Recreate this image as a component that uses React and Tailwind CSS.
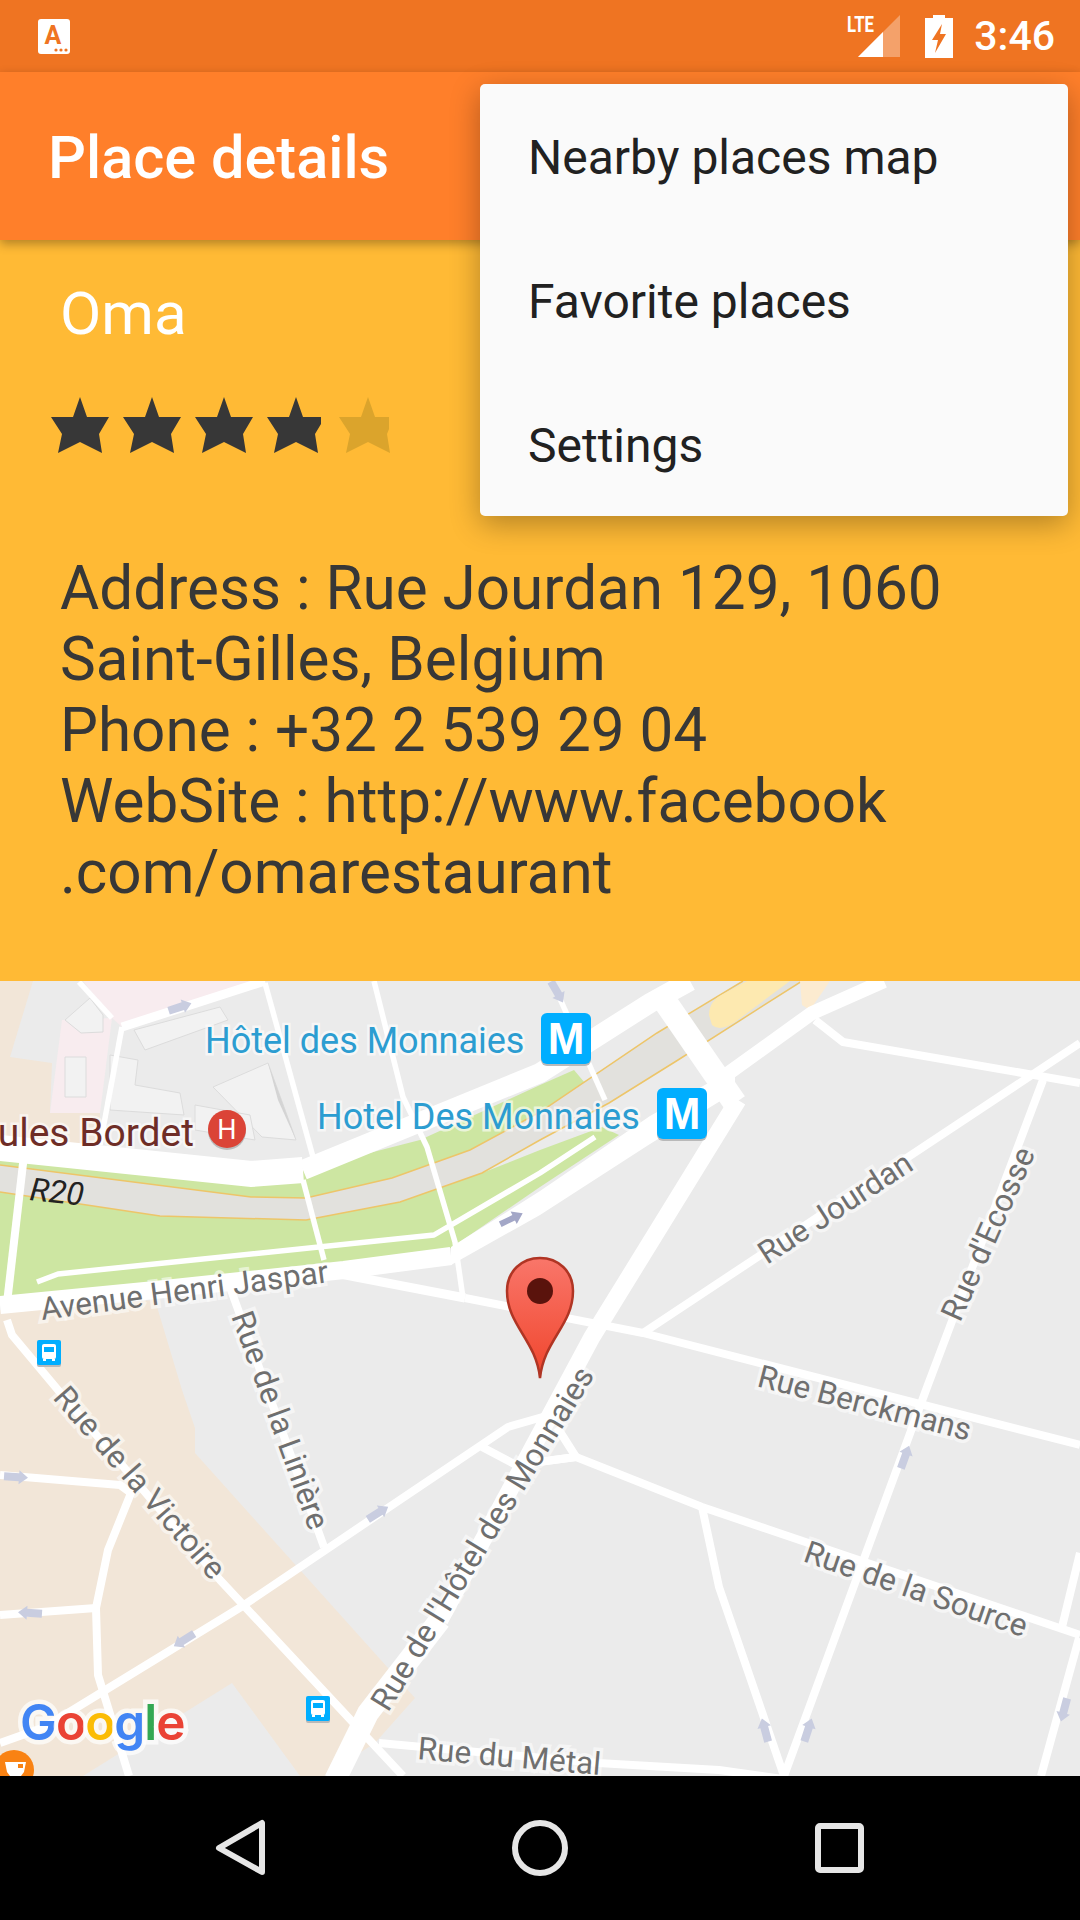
const thinRoads = [
  "M7 1320L12 1335L58 1390L220 1580L403 1776",
  "M24 1155L7 1303",
  "M0 1475L120 1485L131 1493L108 1550L96 1608L98 1675L129 1776",
  "M0 1615L96 1608",
  "M0 1743L45 1727L241 1607L508 1427L560 1412",
  "M482 1447L516 1465L576 1457L557 1427",
  "M516 1465L576 1457L702 1507L1080 1635",
  "M702 1507L719 1587L784 1776",
  "M1043 1080L926 1390L784 1776",
  "M465 1298L643 1333L1080 1445",
  "M643 1333L1080 1043",
  "M815 1020L843 1042L1080 1083",
  "M379 1743L598 1763L719 1770L790 1780",
  "M1062 1627L1080 1553",
  "M1079 1638L1041 1776",
  "M231 1290L324 1547",
];

const parkPaths = [
  "M265 983L313 1157",
  "M374 981L403 1097L427 1147L455 1242L463 1298",
  "M303 1180L324 1260",
  "M79 982L112 1018",
  "M553 983L605 1100",
  "M122 1027L100 1145",
  "M37 1282L58 1274L434 1235L540 1173L595 1137",
];

const buildings = [
  "M65 1020L90 998L103 1015L103 1032L81 1033Z",
  "M65 1057H86V1097H65Z",
  "M134 1030L220 1007L228 1020L145 1050Z",
  "M110 1055L138 1060L135 1085L180 1093L184 1115L110 1110Z",
  "M213 1087L268 1063L296 1140L262 1137Z",
  "M195 1105L250 1115L255 1140L195 1130Z",
];

const arrows = [
  [180, 1007, -18],
  [557, 992, 60],
  [16, 1477, 4],
  [30, 1613, 184],
  [184, 1640, 148],
  [378, 1513, -32],
  [905, 1457, -70],
  [765, 1730, -105],
  [808, 1730, -72],
  [1064, 1710, 105],
];

const labels = [
  { text: "Avenue Henri Jaspar", x: 42, y: 1320, r: -7.5 },
  { text: "Rue de la Linière", x: 231, y: 1316, r: 70 },
  { text: "Rue de la Victoire", x: 52, y: 1398, r: 49 },
  { text: "Rue de l'Hôtel des Monnaies", x: 388, y: 1713, r: -58.5 },
  { text: "Rue Jourdan", x: 767, y: 1265, r: -33 },
  { text: "Rue d'Ecosse", x: 960, y: 1323, r: -66 },
  { text: "Rue Berckmans", x: 756, y: 1386, r: 14.5 },
  { text: "Rue de la Source", x: 802, y: 1561, r: 19 },
  { text: "Rue du Métal", x: 417, y: 1759, r: 5 },
];

const MetroIcon = ({ x, y }) => (
  <g>
    <rect x={x} y={y + 2} width="50" height="51" rx="6" fill="#b9b9b9" />
    <rect x={x} y={y} width="50" height="51" rx="6" fill="#00aeff" />
    <text x={x + 25} y={y + 41} textAnchor="middle" fontSize="44" fontWeight="700" fill="#fff" className="font-['Liberation_Sans']">
      M
    </text>
  </g>
);

const BusIcon = ({ x, y }) => (
  <g>
    <rect x={x} y={y + 2} width="24" height="25" rx="2" fill="#b9b9b9" />
    <rect x={x} y={y} width="24" height="25" rx="2" fill="#00aeff" />
    <rect x={x + 5} y={y + 4} width="14" height="15" rx="2" fill="#fff" />
    <rect x={x + 7} y={y + 7} width="10" height="5" fill="#00aeff" />
    <rect x={x + 6} y={y + 19} width="3" height="2" fill="#fff" />
    <rect x={x + 15} y={y + 19} width="3" height="2" fill="#fff" />
  </g>
);

const MapView = () => (
  <div className="flex-1 overflow-hidden bg-[#ebebeb]">
    <svg viewBox="0 981 1080 795" className="block w-full h-full font-['Roboto']">
      <defs>
        <linearGradient id="pin" x1="0" y1="0" x2="0" y2="1">
          <stop offset="0" stopColor="#f9766a" />
          <stop offset="1" stopColor="#f0452c" />
        </linearGradient>
      </defs>

      {/* land areas */}
      <path d="M0 981H33L10 1057L52 1063L50 1113H100L100 1145L0 1145Z" fill="#f2e6d8" />
      <path d="M83 981H255L122 1027L112 1018ZM62 1020L112 1018L100 1113H50Z" fill="#f8ecef" />
      <path d="M122 1027L255 985L265 981L313 1157L251 1165L100 1145L105 1100Z" fill="#ebebeb" />
      {buildings.map((d) => (
        <path key={d} d={d} fill="#f2f2f2" stroke="#dcdcdc" strokeWidth="1" />
      ))}
      <path d="M268 1063L296 1140L278 1100Z" fill="#d4d4d4" />
      <path d="M0 1310L155 1300L182 1390L195 1428L195 1453L415 1698L375 1743L324 1776H300L232 1683L83 1776H0Z" fill="#f2e6d8" />

      {/* park and the sunken road */}
      <path d="M0 1150L251 1180L303 1170L420 1140L540 1085L574 1070L585 1083L540 1120L482 1173L540 1150L602 1127L619 1135L540 1187L451 1248L0 1305Z" fill="#cde6a2" />
      <path d="M0 1165L251 1197L306 1198L392 1178L470 1150L540 1112L657 1033L743 981H802L709 1040L678 1060L609 1103L540 1140L482 1173L400 1202L306 1220L160 1216L0 1192Z" fill="#e2e1dd" />
      <path d="M0 1165L251 1197L306 1198L392 1178L470 1150L540 1112L657 1033L743 981" fill="none" stroke="#edc569" strokeWidth="1.5" />
      <path d="M0 1192L160 1216L306 1220L400 1202L482 1173L540 1140L609 1103L678 1060L802 981" fill="none" stroke="#edc569" strokeWidth="1.5" />
      <path d="M709 1015Q709 1000 725 993L747 981H790L735 1022Q720 1032 712 1025Z" fill="#fde9b0" />
      <path d="M800 981H830L810 1010L802 1005Z" fill="#fcebd0" />

      {/* main roads */}
      <path d="M0 1148L251 1174L303 1170" fill="none" stroke="#fff" strokeWidth="26" />
      <path d="M303 1170L540 1073L650 1003L690 981" fill="none" stroke="#fff" strokeWidth="20" />
      <path d="M0 1305L155 1290L344 1270L451 1256" fill="none" stroke="#fff" strokeWidth="18" />
      <path d="M451 1247L540 1191L650 1116L735 1068V1092L650 1144L540 1215L451 1265Z" fill="#fff" />
      <path d="M330 1272L465 1298" fill="none" stroke="#fff" strokeWidth="9" />
      <path d="M664 1000L735 1103" fill="none" stroke="#fff" strokeWidth="24" />
      <path d="M726 1075L812 1013L884 981" fill="none" stroke="#fff" strokeWidth="14" />
      <path d="M738 1100L592 1337L440 1620" fill="none" stroke="#fff" strokeWidth="17" />
      <path d="M440 1620L368 1713L335 1780" fill="none" stroke="#fff" strokeWidth="22" />
      <path d="M122 1027L265 981" fill="none" stroke="#fff" strokeWidth="9" />
      {thinRoads.map((d) => (
        <path key={d} d={d} fill="none" stroke="#fff" strokeWidth="8" strokeLinejoin="round" />
      ))}
      {parkPaths.map((d) => (
        <path key={d} d={d} fill="none" stroke="#fff" strokeWidth="5.5" strokeLinejoin="round" />
      ))}

      {arrows.map(([x, y, r]) => (
        <path
          key={`${x}-${y}`}
          d="M-12 -4H3V-7L12 0L3 7V4H-12Z"
          fill="#c9cde0"
          transform={`translate(${x} ${y}) rotate(${r})`}
        />
      ))}
      <path d="M-12 -3H3V-7L13 0L3 7V3H-12Z" fill="#a3a7c7" transform="translate(511 1219) rotate(-26)" />

      {/* place labels */}
      <text x="205" y="1053" fontSize="36" fill="#2c9dd1" stroke="#fff" strokeOpacity="0.6" strokeWidth="5" className="[paint-order:stroke]">
        Hôtel des Monnaies
      </text>
      <text x="317" y="1129" fontSize="36" fill="#2c9dd1" stroke="#fff" strokeOpacity="0.6" strokeWidth="5" className="[paint-order:stroke]">
        Hotel Des Monnaies
      </text>
      <text x="194" y="1146" textAnchor="end" fontSize="39" fill="#6e2d27" stroke="#fff" strokeOpacity="0.6" strokeWidth="5" className="[paint-order:stroke]">
        ules Bordet
      </text>
      <text x="29" y="1200" fontSize="32" fontStyle="italic" fill="#222" transform="rotate(6 29 1200)">
        R20
      </text>

      <circle cx="227" cy="1131" r="19" fill="#bbb" />
      <circle cx="227" cy="1129" r="19" fill="#db4437" />
      <text x="227" y="1139" textAnchor="middle" fontSize="27" fill="#fff">
        H
      </text>

      <MetroIcon x={541} y={1013} />
      <MetroIcon x={657} y={1088} />
      <BusIcon x={37} y={1340} />
      <BusIcon x={306} y={1696} />

      {labels.map((l) => (
        <text
          key={l.text}
          x={l.x}
          y={l.y}
          fontSize="31.5"
          fill="#6f6f6f"
          stroke="#fff"
          strokeOpacity="0.55"
          strokeWidth="7"
          transform={`rotate(${l.r} ${l.x} ${l.y})`}
          className="[paint-order:stroke]"
        >
          {l.text}
        </text>
      ))}

      {/* marker */}
      <path
        d="M540 1378C536 1340 507 1325 507 1291C507 1271 522 1258 540 1258C558 1258 573 1271 573 1291C573 1325 544 1340 540 1378Z"
        fill="url(#pin)"
        stroke="#b03524"
        strokeWidth="2.5"
      />
      <circle cx="540" cy="1291" r="13" fill="#5a130c" />

      {/* google logo */}
      <text x="20" y="1740" fontSize="49.5" fontWeight="600" letterSpacing="-1" stroke="#fff" strokeOpacity="0.7" strokeWidth="9" className="font-['Inter'] [paint-order:stroke]">
        <tspan fill="#4285f4">G</tspan>
        <tspan fill="#ea4335">o</tspan>
        <tspan fill="#fbbc05">o</tspan>
        <tspan fill="#4285f4">g</tspan>
        <tspan fill="#34a853">l</tspan>
        <tspan fill="#ea4335">e</tspan>
      </text>

      <circle cx="14" cy="1770" r="20" fill="#f98213" />
      <path d="M5 1762H26L24 1772L21 1776H10L7 1772Z" fill="#fff" />
      <rect x="18" y="1764" width="5" height="4" fill="#f98213" />
    </svg>
  </div>
);

const starPaths = {
  full: "M29 0L36 20L58 20L48 37L51 56L29 45L7 56L11 37L0 20L22 20Z",
  cut54: "M29 0L36 20L54 20L54 27L48 37L51 56L29 45L7 56L11 37L0 20L22 20Z",
  cut50: "M29 0L36 20L50 20L50 32L48 37L51 56L29 45L7 56L11 37L0 20L22 20Z",
};

const Star = ({ shape = "full", className }) => (
  <svg viewBox="0 0 72 58" className={`w-[72px] h-[58px] shrink-0 ${className}`}>
    <path d={starPaths[shape]} fill="currentColor" />
  </svg>
);

const StatusBar = () => (
  <div className="h-[72px] shrink-0 bg-[#ef7422] flex items-center justify-between pl-[38px] pr-[25px]">
    <svg viewBox="0 0 32 35" className="w-8 h-[35px]">
      <rect width="32" height="35" rx="3" fill="#fff" />
      <text x="15" y="25" textAnchor="middle" fontSize="25" fontWeight="700" fill="#ef7422" className="font-['Roboto']">
        A
      </text>
      <circle cx="18" cy="31" r="1.6" fill="#ef7422" />
      <circle cx="23" cy="31" r="1.6" fill="#ef7422" />
      <circle cx="28" cy="31" r="1.6" fill="#ef7422" />
    </svg>
    <div className="flex items-center">
      <svg viewBox="0 0 53 44" className="w-[53px] h-11 mr-[25px]">
        <text x="0" y="18" fontSize="22" fontWeight="700" fill="#fff" textLength="27" lengthAdjust="spacingAndGlyphs" className="font-['Roboto']">
          LTE
        </text>
        <path d="M53 1L53 43H11Z" fill="#fff" fillOpacity="0.33" />
        <path d="M36 18L36 43H11Z" fill="#fff" />
      </svg>
      <svg viewBox="0 0 28 43" className="w-7 h-[43px] mr-[21px]">
        <path d="M8 0H20V3H28V43H0V3H8Z" fill="#fff" />
        <path d="M17 9L7 25H13L10 38L21 19H15Z" fill="#ef7422" />
      </svg>
      <span className="font-['Roboto'] font-medium text-[41px] leading-none text-white">3:46</span>
    </div>
  </div>
);

const NavBar = () => (
  <div className="h-[144px] shrink-0 bg-black">
    <svg viewBox="0 0 1080 144" className="block w-full h-full">
      <path d="M262 47V96L219 72Z" fill="none" stroke="#e6e6e6" strokeWidth="6" strokeLinejoin="round" />
      <circle cx="540" cy="72" r="25" fill="none" stroke="#e6e6e6" strokeWidth="6" />
      <rect x="818" y="50" width="43" height="44" rx="2" fill="none" stroke="#e6e6e6" strokeWidth="6" />
    </svg>
  </div>
);

export default function App() {
  return (
    <div className="relative w-[1080px] h-[1920px] flex flex-col overflow-hidden font-['Roboto']">
      <StatusBar />

      <header className="relative z-10 h-[168px] shrink-0 bg-[#ff7f2a] flex items-center pl-[48px] pt-[5px] shadow-[0_4px_10px_rgba(0,0,0,0.3)]">
        <h1 className="text-[59.5px] font-medium leading-none text-white">Place details</h1>
      </header>

      <section className="h-[741px] shrink-0 bg-[#ffba35] pt-[38px]">
        <p className="pl-[60px] text-[60px] leading-[72px] text-white">Oma</p>
        <div className="flex pl-[51px] mt-[47px]">
          <Star className="text-[#373737]" />
          <Star className="text-[#373737]" />
          <Star className="text-[#373737]" />
          <Star shape="cut54" className="text-[#373737]" />
          <Star shape="cut50" className="text-[#dba42c]" />
        </div>
        <p className="pl-[60px] pr-[60px] mt-[98px] text-[60.2px] leading-[71px] text-[#373737]">
          Address : Rue Jourdan 129, 1060
          <br />
          Saint-Gilles, Belgium
          <br />
          Phone : +32 2 539 29 04
          <br />
          WebSite : http://www.facebook
          <br />
          .com/omarestaurant
        </p>
      </section>

      <MapView />
      <NavBar />

      {/* overflow menu */}
      <ul className="absolute z-20 left-[480px] top-[84px] w-[588px] h-[432px] pt-[2px] bg-[#fafafa] rounded-[5px] shadow-[0_8px_30px_rgba(0,0,0,0.3)] text-[48px] text-[#212121]">
        <li className="h-[144px] flex items-center pl-[48px]">Nearby places map</li>
        <li className="h-[144px] flex items-center pl-[48px]">Favorite places</li>
        <li className="h-[144px] flex items-center pl-[48px]">Settings</li>
      </ul>
    </div>
  );
}
